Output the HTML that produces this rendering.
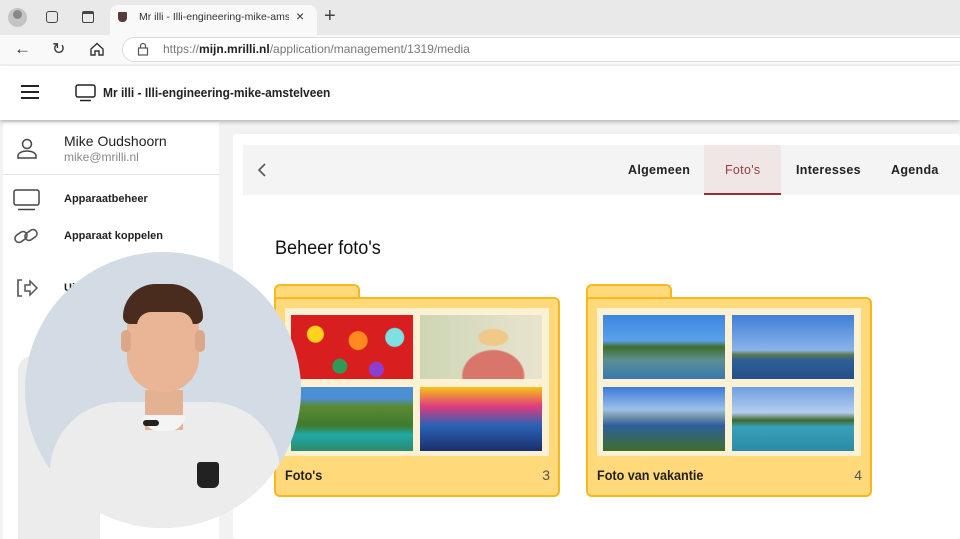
<!DOCTYPE html>
<html><head><meta charset="utf-8"><style>
*{margin:0;padding:0;box-sizing:border-box}
body{width:960px;height:539px;overflow:hidden;font-family:"Liberation Sans",sans-serif;background:#f2f2f2;position:relative}
.abs{position:absolute}
.tabbar{left:0;top:0;width:960px;height:35px;background:#e9e9e9}
.addr{left:0;top:35px;width:960px;height:29px;background:#f9f9f9}
.hdr{left:0;top:66px;width:960px;height:54px;background:#fff;box-shadow:0 2px 4px rgba(0,0,0,.25);z-index:3}
.side{left:3px;top:122px;width:216px;height:417px;background:#fff}
.card{left:233px;top:134px;width:727px;height:405px;background:#fff;border-radius:4px}
.nav{left:243px;top:145px;width:717px;height:50px;background:#f4f4f4}
.t{position:absolute;top:163px;font-size:12.5px;font-weight:bold;color:#222;letter-spacing:.3px}
.folder{position:absolute;width:286px;height:213px}
.ftab{position:absolute;left:0;top:0;width:86px;height:20px;background:#ffd97a;border:2px solid #f7b81f;border-bottom:none;border-radius:6px 6px 0 0}
.fbody{position:absolute;left:0;top:13px;width:286px;height:200px;background:#ffd97a;border:2px solid #f7b81f;border-radius:4px 6px 6px 6px}
.inner{position:absolute;left:11px;top:24px;width:264px;height:148px;background:#fdf1d4}
.img{position:absolute;width:122px;height:64px}
.fl{position:absolute;left:11px;top:183px;font-size:14px;color:#222;font-weight:bold;white-space:nowrap;transform:scaleX(.9);transform-origin:left}
.fn{position:absolute;right:10px;top:183px;font-size:14px;color:#555}
</style></head><body>
<div class="abs tabbar"></div>
<div class="abs" style="left:110px;top:5px;width:207px;height:30px;background:#f9f9f9;border-radius:8px 8px 0 0"></div>
<div class="abs" style="left:8px;top:8px;width:19px;height:19px;border-radius:50%;background:#c4c4c4"></div>
<div class="abs" style="left:13px;top:10px;width:9px;height:9px;border-radius:50%;background:#888"></div>
<div class="abs" style="left:46px;top:11px;width:12px;height:12px;border:1.5px solid #444;border-radius:3px"></div>
<div class="abs" style="left:82px;top:11px;width:12px;height:12px;border:1.5px solid #444;border-top-width:3px;border-radius:2px"></div>
<div class="abs" style="left:118px;top:12px;width:9px;height:10px;background:#5a3a3a;border-radius:1px 1px 4px 4px"></div>
<div class="abs" style="left:139px;top:11px;font-size:10.5px;color:#333;width:150px;overflow:hidden;white-space:nowrap">Mr illi - Illi-engineering-mike-ams</div>
<div class="abs" style="left:296px;top:8px;font-size:14px;color:#333">×</div>
<div class="abs" style="left:324px;top:5px;font-size:20px;color:#444;font-weight:300">+</div>
<div class="abs addr"></div>
<div class="abs" style="left:14px;top:39px;font-size:17px;color:#333">←</div>
<div class="abs" style="left:52px;top:39px;font-size:16px;color:#333">↻</div>
<svg class="abs" style="left:89px;top:41px" width="16" height="16" viewBox="0 0 16 16"><path d="M2 8L8 2.5 14 8V14H10V10H6V14H2Z" fill="none" stroke="#333" stroke-width="1.4"/></svg>
<div class="abs" style="left:122px;top:37px;width:850px;height:25px;background:#fff;border:1px solid #ddd;border-radius:13px"></div>
<svg class="abs" style="left:137px;top:42px" width="12" height="14" viewBox="0 0 12 14"><rect x="1.5" y="6" width="9" height="7" fill="none" stroke="#555" stroke-width="1.2"/><path d="M3.5 6V4a2.5 2.5 0 015 0v2" fill="none" stroke="#555" stroke-width="1.2"/></svg>
<div class="abs" style="left:163px;top:42px;font-size:12px;color:#777">https://<b style="color:#222">mijn.mrilli.nl</b>/application/management/1319/media</div>
<div class="abs hdr">
<div class="abs" style="left:21px;top:19px;width:18px;height:2px;background:#222;box-shadow:0 6px 0 #222,0 12px 0 #222"></div>
<svg class="abs" style="left:75px;top:18px" width="21" height="18" viewBox="0 0 21 18"><rect x="1" y="1" width="19" height="12" rx="2" fill="none" stroke="#222" stroke-width="1.5"/><path d="M5 16.5H16" stroke="#222" stroke-width="1.5"/></svg>
<div class="abs" style="left:103px;top:19px;font-size:13px;font-weight:bold;color:#222;transform:scaleX(.92);transform-origin:left;white-space:nowrap">Mr illi - Illi-engineering-mike-amstelveen</div>
</div>
<div class="abs side">
<div class="abs" style="left:0;top:52px;width:216px;height:1px;background:#e4e4e4"></div>
</div>
<svg class="abs" style="left:16px;top:137px" width="22" height="24" viewBox="0 0 22 24"><circle cx="11" cy="7" r="4.5" fill="none" stroke="#444" stroke-width="1.5"/><path d="M2 21v-2c0-3 4-5 9-5s9 2 9 5v2z" fill="none" stroke="#444" stroke-width="1.5"/></svg>
<div class="abs" style="left:64px;top:133px;font-size:14px;color:#222">Mike Oudshoorn</div>
<div class="abs" style="left:64px;top:150px;font-size:12px;color:#888">mike@mrilli.nl</div>
<svg class="abs" style="left:13px;top:189px" width="27" height="22" viewBox="0 0 27 22"><rect x="1" y="1" width="25" height="15" rx="2" fill="none" stroke="#444" stroke-width="1.5"/><path d="M5 20.5H22" stroke="#444" stroke-width="1.5"/></svg>
<div class="abs" style="left:64px;top:193px;font-size:11px;font-weight:bold;color:#222">Apparaatbeheer</div>
<svg class="abs" style="left:13px;top:226px" width="26" height="20" viewBox="0 0 26 20"><g fill="none" stroke="#555" stroke-width="1.6"><rect x="1.5" y="7" width="13" height="8" rx="4" transform="rotate(-35 8 11)"/><rect x="11.5" y="5" width="13" height="8" rx="4" transform="rotate(-35 18 9)"/></g></svg>
<div class="abs" style="left:64px;top:230px;font-size:11px;font-weight:bold;color:#222">Apparaat koppelen</div>
<svg class="abs" style="left:15px;top:278px" width="24" height="20" viewBox="0 0 24 20"><path d="M7 2H3v16h4" fill="none" stroke="#555" stroke-width="1.6"/><path d="M10 7h5V3l7 7-7 7v-4h-5z" fill="none" stroke="#555" stroke-width="1.5"/></svg>
<div class="abs" style="left:64px;top:282px;font-size:11px;font-weight:bold;color:#222">Uitloggen</div>
<div class="abs" style="left:18px;top:356px;width:82px;height:183px;background:#ececec;border-radius:14px 14px 0 0"></div>
<div class="abs" style="left:219px;top:122px;width:14px;height:417px;background:#f2f2f2"></div>
<div class="abs card"></div>
<div class="abs nav"></div>
<svg class="abs" style="left:257px;top:162px" width="10" height="16" viewBox="0 0 10 16"><path d="M8 2L2 8l6 6" fill="none" stroke="#555" stroke-width="1.6"/></svg>
<div class="abs" style="left:704px;top:145px;width:77px;height:50px;background:#f0e6e6;border-bottom:2px solid #9b2c32"></div>
<div class="t" style="left:628px">Algemeen</div>
<div class="t" style="left:725px;color:#9b3a3f;font-weight:normal">Foto's</div>
<div class="t" style="left:796px">Interesses</div>
<div class="t" style="left:891px">Agenda</div>
<div class="abs" style="left:275px;top:238px;font-size:19px;color:#111;transform:scaleX(.95);transform-origin:left">Beheer foto's</div>

<div class="folder" style="left:274px;top:284px">
<div class="ftab"></div><div class="fbody"></div>
<div class="inner">
<div class="img" style="left:6px;top:7px;background:radial-gradient(circle at 20% 30%,#ffd21e 8px,transparent 9px),radial-gradient(circle at 55% 40%,#ff8a1e 9px,transparent 10px),radial-gradient(circle at 85% 35%,#7ee0e0 9px,transparent 10px),radial-gradient(circle at 40% 80%,#2e9a55 7px,transparent 8px),radial-gradient(circle at 70% 85%,#8b3fd0 7px,transparent 8px),#d81e1e"></div>
<div class="img" style="left:135px;top:7px;background:radial-gradient(ellipse at 60% 35%,#f0c88a 14px,transparent 16px),radial-gradient(ellipse at 60% 95%,#d9756a 30px,transparent 32px),linear-gradient(90deg,#cdd6b4,#e8e4cf)"></div>
<div class="img" style="left:6px;top:79px;background:linear-gradient(180deg,#4a8fd4 0,#4a8fd4 18%,#5c8a35 30%,#3f7a2e 60%,#1fa9a4 75%,#2c8a6e 100%)"></div>
<div class="img" style="left:135px;top:79px;background:linear-gradient(180deg,#f5c416 0,#e23b7d 30%,#2a62b6 60%,#1b2f6a 100%)"></div>
</div>
<div class="fl">Foto's</div><div class="fn">3</div>
</div>

<div class="folder" style="left:586px;top:284px">
<div class="ftab"></div><div class="fbody"></div>
<div class="inner">
<div class="img" style="left:6px;top:7px;background:linear-gradient(180deg,#3d86e0 0,#5aa0ea 40%,#3e6e2a 50%,#5c8f90 70%,#3a78b0 100%)"></div>
<div class="img" style="left:135px;top:7px;background:linear-gradient(180deg,#3f7fd8 0,#8ab4ea 55%,#5c7a48 62%,#2f5f98 70%,#244f88 100%)"></div>
<div class="img" style="left:6px;top:79px;background:linear-gradient(180deg,#3b7ad8 0,#9cc0ea 35%,#7a9ab0 45%,#2e5e9e 60%,#3e6e2a 100%)"></div>
<div class="img" style="left:135px;top:79px;background:linear-gradient(180deg,#6d9fe0 0,#b5cdef 40%,#3e6a2a 52%,#3aa0b8 62%,#2a8aa8 100%)"></div>
</div>
<div class="fl">Foto van vakantie</div><div class="fn">4</div>
</div>

<div class="abs" style="left:25px;top:252px;width:276px;height:276px;border-radius:50%;background:#d3dbe5;overflow:hidden;z-index:5">
<div class="abs" style="left:25px;top:150px;width:230px;height:140px;background:#ececec;border-radius:70px 70px 0 0"></div>
<div class="abs" style="left:120px;top:138px;width:38px;height:40px;background:#e3b293"></div>
<div class="abs" style="left:118px;top:163px;width:42px;height:16px;background:#f4f4f4;border-radius:0 0 20px 20px"></div>
<div class="abs" style="left:102px;top:40px;width:72px;height:100px;background:#e9b596;border-radius:36px 36px 34px 34px"></div>
<div class="abs" style="left:96px;top:78px;width:10px;height:22px;background:#dca788;border-radius:5px"></div>
<div class="abs" style="left:170px;top:78px;width:10px;height:22px;background:#dca788;border-radius:5px"></div>
<div class="abs" style="left:98px;top:32px;width:80px;height:40px;background:#4a2c1e;border-radius:36px 36px 8px 8px"></div>
<div class="abs" style="left:112px;top:60px;width:56px;height:14px;background:#e9b596;border-radius:14px 14px 0 0"></div>
<div class="abs" style="left:118px;top:168px;width:16px;height:6px;background:#222;border-radius:3px"></div>
<div class="abs" style="left:172px;top:210px;width:22px;height:26px;background:#222;border-radius:3px 3px 6px 6px"></div>
</div>
</body></html>
